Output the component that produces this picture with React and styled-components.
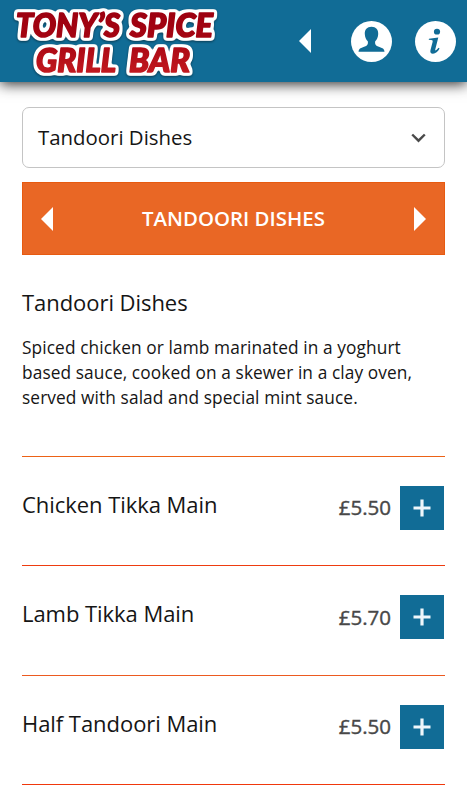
import * as React from "react"
import {useState} from "react"
import styled, {createGlobalStyle} from 'styled-components'

const GlobalStyle = createGlobalStyle`
:root{
  --blue: #116c96;
  --orange: #e96725;
}
*{
  box-sizing: border-box;
}
body{
  margin: 0;
  background: #fff;
  color: #151515;
  font-family: "Open Sans", "Noto Sans", sans-serif;
}
#root{
  height: 800px;
  overflow: hidden;
}
`

const Header = styled.header`
height: 82px;
display: flex;
align-items: flex-start;
background-color: var(--blue);
box-shadow: 0 2px 13px rgba(0, 0, 0, 0.85);
`

const Logo = styled.svg`
width: 230px;
height: 82px;
flex: none;
text{
  font-family: Lato, "Open Sans", sans-serif;
  font-weight: 900;
  font-style: italic;
  font-size: 32px;
  fill: url(#logoRed);
  stroke: url(#logoRed);
  stroke-width: 1.6px;
  stroke-linejoin: round;
}
`

const Actions = styled.nav`
display: flex;
align-items: center;
height: 82px;
margin-left: auto;
padding-right: 11px;
`

const IconButton = styled.button`
display: flex;
border: none;
padding: 0;
margin: 0 0 0 ${props => props.$gap || 0}px;
background: none;
cursor: pointer;
svg{
  display: block;
}
`

const Page = styled.main`
padding: 25px 22px 0;
`

const Select = styled.button`
width: 100%;
height: 61px;
display: flex;
align-items: center;
justify-content: space-between;
padding: 0 18px 2px 15px;
border: 1px solid #c4c4c4;
border-radius: 7px;
background: #fff;
color: #151515;
font-family: inherit;
font-size: 20.4px;
line-height: 28px;
svg{
  margin-top: 2px;
}
`

const Banner = styled.div`
height: 73px;
display: flex;
align-items: center;
justify-content: space-between;
margin-top: 14.4px;
padding: 0 18px;
background-color: var(--orange);
border: 1px solid #e75a10;
h1{
  margin: 0 0 2px;
  color: #fff;
  font-size: 20.4px;
  font-weight: 600;
  text-transform: uppercase;
}
`

const Intro = styled.section`
height: 200.6px;
padding-top: 32px;
h2{
  margin: 0;
  font-size: 22px;
  line-height: 30px;
  font-weight: 400;
  letter-spacing: -0.05px;
}
p{
  margin: 17.5px 0 0;
  font-size: 17.3px;
  line-height: 25px;
  letter-spacing: 0.1px;
  max-width: 405px;
}
`

const Divider = styled.div`
height: 1px;
background-color: ${props => props.$color};
`

const Dish = styled.article`
height: 108.5px;
display: flex;
padding: 29px 1px 0 0;
`

const Name = styled.h3`
flex: 1;
margin: 3px 0 0;
font-size: 22px;
line-height: 30px;
font-weight: 400;
letter-spacing: -0.05px;
`

const Price = styled.span`
margin: 7.4px 9px 0 0;
color: #484848;
font-size: 20.5px;
line-height: 28px;
-webkit-text-stroke: 0.4px #484848;
`

const Add = styled.button`
width: 44px;
height: 44px;
display: flex;
align-items: center;
justify-content: center;
padding: 0;
border: none;
background-color: var(--blue);
:hover{
  cursor: pointer;
}
`

const Arrow = ({flip}) => (
  <svg width="12" height="24" viewBox="0 0 12 24">
    <path d={flip ? 'M0 0 12 12 0 24Z' : 'M12 0 0 12 12 24Z'} fill="#fff" />
  </svg>
)

const dishes = [
  {name: 'Chicken Tikka Main', price: '£5.50', line: '#ec6216'},
  {name: 'Lamb Tikka Main', price: '£5.70', line: '#ee3c10'},
  {name: 'Half Tandoori Main', price: '£5.50', line: '#ec5a20'},
]

const App = () => {
  const [basket, setBasket] = useState([])

  return(
    <>
    <GlobalStyle />
    <Header>
      <Logo viewBox="0 0 230 82">
        <defs>
          <linearGradient id="logoRed" gradientUnits="userSpaceOnUse" x1="0" y1="10" x2="0" y2="74">
            <stop offset="0" stopColor="#9c0010" />
            <stop offset="0.45" stopColor="#a50512" />
            <stop offset="1" stopColor="#c3191f" />
          </linearGradient>
          {/* rounded white outline with a soft shadow under it */}
          <filter id="halo" filterUnits="userSpaceOnUse" x="0" y="0" width="230" height="82" colorInterpolationFilters="sRGB">
            <feMorphology in="SourceAlpha" operator="dilate" radius="1.5" result="fat" />
            <feGaussianBlur in="fat" stdDeviation="1.6" />
            <feColorMatrix values="0 0 0 0 1  0 0 0 0 1  0 0 0 0 1  0 0 0 5 -0.7" result="white" />
            <feDropShadow in="white" dx="0" dy="1" stdDeviation="1" floodColor="#000" floodOpacity="0.45" />
            <feMerge>
              <feMergeNode />
              <feMergeNode in="SourceGraphic" />
            </feMerge>
          </filter>
        </defs>
        <g filter="url(#halo)">
          <text x="16" y="36.5" textLength="104" lengthAdjust="spacingAndGlyphs">TONY’S</text>
          <text x="130" y="36.5" textLength="83" lengthAdjust="spacingAndGlyphs">SPICE</text>
          <text x="36" y="72" textLength="80" lengthAdjust="spacingAndGlyphs">GRILL</text>
          <text x="129" y="72" textLength="61" lengthAdjust="spacingAndGlyphs">BAR</text>
        </g>
      </Logo>
      <Actions>
        <IconButton aria-label="Back"><Arrow /></IconButton>
        <IconButton $gap={40} aria-label="Account">
          <svg width="41" height="41" viewBox="0 0 41 41">
            <circle cx="20.5" cy="20.5" r="20.5" fill="#fff" />
            <path d="M20.5 5.8C16 5.8 13.6 8.9 13.8 13c.1 3.2 1.3 5.6 3 7.3.5 2.6-.2 4-2.3 5-2.8 1.2-5 1.7-6 2.8-.6.7-.9 1.6-1 2.7h26c-.1-1.1-.4-2-1-2.7-1-1.1-3.2-1.6-6-2.8-2.1-1-2.8-2.4-2.3-5 1.7-1.7 2.9-4.1 3-7.3.2-4.1-2.2-7.2-6.7-7.2Z" fill="#116c96" />
          </svg>
        </IconButton>
        <IconButton $gap={23} aria-label="Information">
          <svg width="41" height="41" viewBox="0 0 41 41">
            <circle cx="20.5" cy="20.5" r="20.5" fill="#fff" />
            <ellipse cx="22" cy="10.7" rx="3.1" ry="2.9" fill="#116c96" />
            <path d="M14 17.7 23.3 16.6 20.3 28.2c-.3 1.2.2 1.5 1 .9.8-.5 1.5-1.3 2.2-2.3l1.1.8c-1.8 3.2-4 5.1-6.6 5.1-2.3 0-3.1-1.4-2.5-3.8l2.1-8c.3-1.3 0-1.8-1.4-1.9l-2.5-.2Z" fill="#116c96" />
          </svg>
        </IconButton>
      </Actions>
    </Header>

    <Page>
      <Select>
        Tandoori Dishes
        <svg width="15" height="10" viewBox="0 0 15 10">
          <path d="M1.2 1.5 7.5 7.7 13.8 1.5" fill="none" stroke="#4a4a4a" strokeWidth="2.4" />
        </svg>
      </Select>
      <Banner>
        <IconButton aria-label="Previous"><Arrow /></IconButton>
        <h1>Tandoori Dishes</h1>
        <IconButton aria-label="Next"><Arrow flip /></IconButton>
      </Banner>
      <Intro>
        <h2>Tandoori Dishes</h2>
        <p>Spiced chicken or lamb marinated in a yoghurt based sauce, cooked on a skewer in a clay oven, served with salad and special mint sauce.</p>
      </Intro>
      {dishes.map(dish => (
        <React.Fragment key={dish.name}>
          <Divider $color={dish.line} />
          <Dish>
            <Name>{dish.name}</Name>
            <Price>{dish.price}</Price>
            <Add aria-label={'Add ' + dish.name} onClick={() => setBasket([...basket, dish.name])}>
              <svg width="18" height="18" viewBox="0 0 18 18">
                <path d="M9 0.5V17.5M0.5 9H17.5" stroke="#eff7fb" strokeWidth="3.2" />
              </svg>
            </Add>
          </Dish>
        </React.Fragment>
      ))}
      <Divider $color="#f0380c" />
    </Page>
    </>
  )
}

export default App
